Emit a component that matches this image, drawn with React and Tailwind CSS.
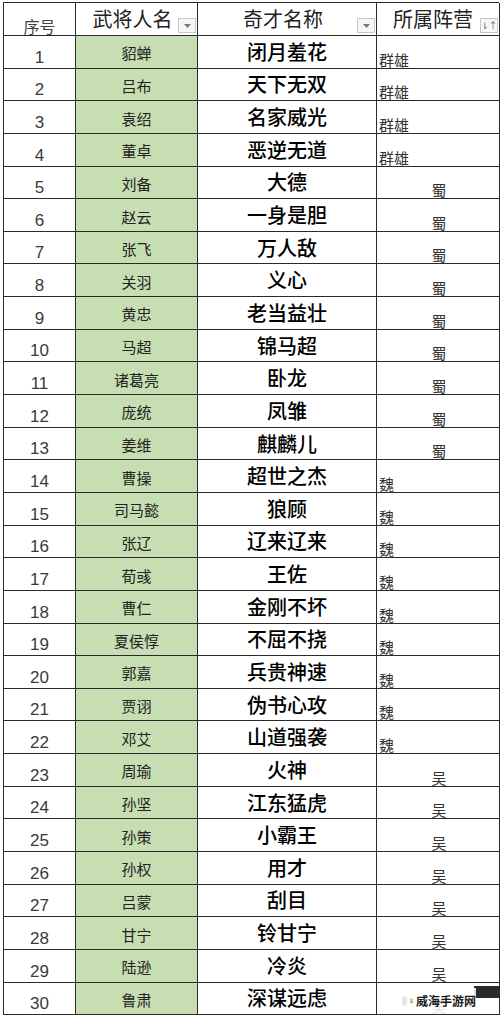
import React from 'react';

const rows = [
  ['貂蝉', '闭月羞花', '群雄'],
  ['吕布', '天下无双', '群雄'],
  ['袁绍', '名家威光', '群雄'],
  ['董卓', '恶逆无道', '群雄'],
  ['刘备', '大德', '蜀'],
  ['赵云', '一身是胆', '蜀'],
  ['张飞', '万人敌', '蜀'],
  ['关羽', '义心', '蜀'],
  ['黄忠', '老当益壮', '蜀'],
  ['马超', '锦马超', '蜀'],
  ['诸葛亮', '卧龙', '蜀'],
  ['庞统', '凤雏', '蜀'],
  ['姜维', '麒麟儿', '蜀'],
  ['曹操', '超世之杰', '魏'],
  ['司马懿', '狼顾', '魏'],
  ['张辽', '辽来辽来', '魏'],
  ['荀彧', '王佐', '魏'],
  ['曹仁', '金刚不坏', '魏'],
  ['夏侯惇', '不屈不挠', '魏'],
  ['郭嘉', '兵贵神速', '魏'],
  ['贾诩', '伪书心攻', '魏'],
  ['邓艾', '山道强袭', '魏'],
  ['周瑜', '火神', '吴'],
  ['孙坚', '江东猛虎', '吴'],
  ['孙策', '小霸王', '吴'],
  ['孙权', '用才', '吴'],
  ['吕蒙', '刮目', '吴'],
  ['甘宁', '铃甘宁', '吴'],
  ['陆逊', '冷炎', '吴'],
  ['鲁肃', '深谋远虑', '吴'],
];

const font = { fontFamily: '"Noto Sans CJK SC", "Noto Sans", sans-serif' };
const numFont = { fontFamily: '"Liberation Sans", Arial, sans-serif' };

function FilterBtn({ sort }) {
  return (
    <div className="absolute right-[1px] bottom-[2px] w-[18px] h-[15px] border border-[#c8c8c8] bg-[#f6f6f6] flex items-center justify-center">
      {sort ? (
        <span className="text-[9px] leading-none text-[#666]">⇂↑</span>
      ) : (
        <svg width="7" height="4" viewBox="0 0 7 4"><path d="M0 0h7L3.5 4z" fill="#777" /></svg>
      )}
    </div>
  );
}

function Watermark() {
  return (
    <div className="absolute right-0 bottom-0 w-[100px] h-[30px]">
      <div className="absolute right-0 top-0 w-[26px] h-[12px] bg-[#2b2b2b]" />
      <div className="absolute left-0 bottom-[2px] w-[76px] h-[26px] bg-white/85 flex items-center gap-[2px] pl-[2px]">
        <span className="w-[16px] h-[10px] rounded-full bg-[#e5e5e5]" />
        <svg width="16" height="16" viewBox="0 0 16 16">
          <path d="M12 3.5C10 1.5 5 1.5 4 4.5 3 7.5 11 7 12 10.5 13 14 6 15 3.5 12.5" fill="none" stroke="#f08a1c" strokeWidth="3" strokeLinecap="round" />
          <path d="M9 8.5C11 9.5 11 12 8.5 13" fill="none" stroke="#2a78c8" strokeWidth="2.5" strokeLinecap="round" />
        </svg>
        <span className="text-[12px] font-bold leading-none text-[#1a1a1a] whitespace-nowrap">威海手游网</span>
      </div>
    </div>
  );
}

export default function App() {
  return (
    <div className="w-[500px] h-[1016px] bg-white overflow-hidden relative" style={font}>
      <div className="pt-[2px] pl-[3px]">
        <div className="w-[496px] border-t border-l border-[#2a2a2a]">
          <div className="grid grid-cols-[72px_122px_179px_123px] h-[33px]">
            <div className="border-r border-b border-[#2a2a2a] flex items-end justify-center pb-[1px]">
              <span className="text-[16px] text-[#444] leading-none">序号</span>
            </div>
            <div className="border-r border-b border-[#2a2a2a] relative flex items-center justify-center pr-[8px]">
              <span className="text-[20px] text-[#222] leading-none">武将人名</span>
              <FilterBtn />
            </div>
            <div className="border-r border-b border-[#2a2a2a] relative flex items-center justify-center pr-[8px]">
              <span className="text-[20px] text-[#222] leading-none">奇才名称</span>
              <FilterBtn />
            </div>
            <div className="border-r border-b border-[#2a2a2a] relative flex items-center justify-center pr-[10px]">
              <span className="text-[20px] text-[#222] leading-none">所属阵营</span>
              <FilterBtn sort />
            </div>
          </div>
          {rows.map(([name, skill, camp], i) => {
            const left = camp === '群雄' || camp === '魏';
            return (
              <div key={i} className="grid grid-cols-[72px_122px_179px_123px] h-[32.65px]">
                <div className="border-r border-b border-[#2a2a2a] flex items-end justify-center pb-[2px]">
                  <span className="text-[17px] text-[#3a3a3a] leading-none" style={numFont}>{i + 1}</span>
                </div>
                <div className="border-r border-b border-[#2a2a2a] bg-[#c6deb2] flex items-center justify-center pt-[2px]">
                  <span className="text-[15px] text-[#222] leading-none">{name}</span>
                </div>
                <div className="border-r border-b border-[#2a2a2a] flex items-center justify-center">
                  <span className="text-[20px] font-medium text-black leading-none">{skill}</span>
                </div>
                <div className={`border-r border-b border-[#2a2a2a] flex items-end pb-[1px] ${left ? 'justify-start pl-[2px]' : 'justify-center pl-[2px]'}`}>
                  <span className="text-[15px] text-[#333] leading-none">{camp}</span>
                </div>
              </div>
            );
          })}
        </div>
      </div>
      <Watermark />
    </div>
  );
}
